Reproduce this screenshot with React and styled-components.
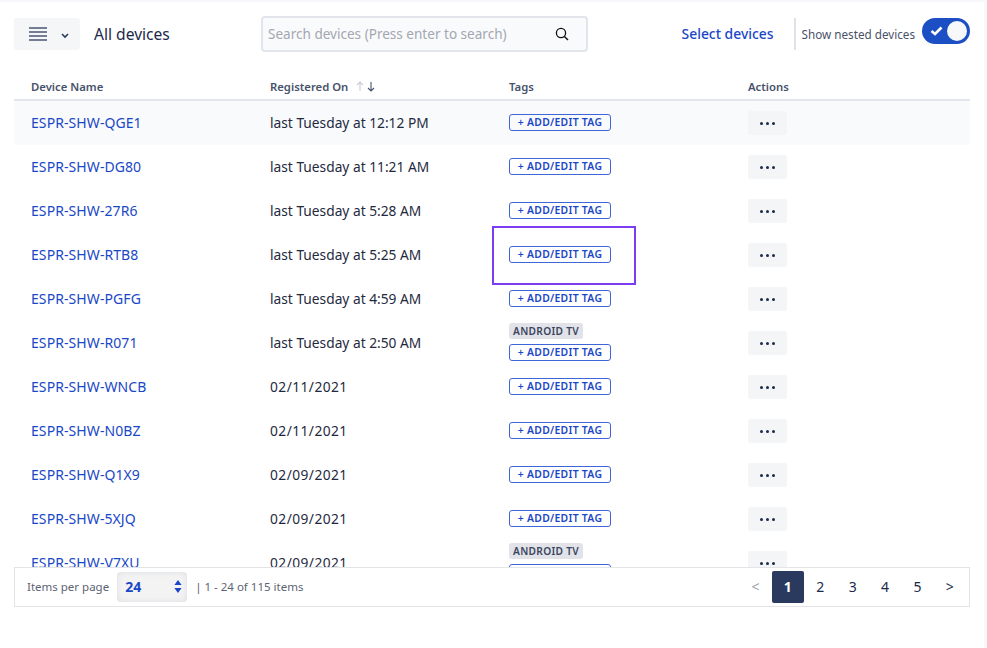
import React from 'react';
import styled, { createGlobalStyle } from 'styled-components';

const GlobalStyle = createGlobalStyle`
    html, body {
        margin: 0;
        padding: 0;
        background: #f7f8fb;
        font-family: "Noto Sans", "Open Sans", Arial, sans-serif;
    }
    * { box-sizing: border-box; }
`

const Page = styled.div`
    width: 987px;
    height: 648px;
    padding-top: 2px;
    overflow: hidden;
`
const Card = styled.div`
    width: 984px;
    height: 646px;
    padding: 14px 14px 0;
    background: #fff;
    display: flex;
    flex-direction: column;
`
const Toolbar = styled.div`
    height: 36px;
    flex: none;
    display: grid;
    grid-template-columns: 247px 327px 1fr;
    align-items: center;
`
const ToolbarLeft = styled.div`
    display: flex;
    align-items: center;
    gap: 14px;
`
const MenuButton = styled.div`
    width: 66px;
    height: 32px;
    background: #f5f6f7;
    border-radius: 3px;
    display: flex;
    align-items: center;
    padding-left: 15px;
    gap: 14px;
`
const Title = styled.div`
    font-size: 15.6px;
    color: #1b2a4a;
    white-space: nowrap;
`
const SearchBox = styled.div`
    height: 36px;
    border: 2px solid #e2e5ec;
    border-radius: 4px;
    background: #f9fafc;
    display: flex;
    align-items: center;
    justify-content: space-between;
    padding: 0 17px 0 5px;
    font-size: 13.55px;
    color: #a3a7b0;
    white-space: nowrap;
`
const ToolbarRight = styled.div`
    display: flex;
    align-items: center;
    justify-content: flex-end;
`
const SelectLink = styled.div`
    font-size: 13.9px;
    font-weight: 500;
    color: #1a47c7;
    white-space: nowrap;
    margin-right: 20px;
    padding-bottom: 2px;
`
const Divider = styled.div`
    width: 2px;
    height: 32px;
    background: #e0e2e8;
    margin-right: 6px;
`
const NestedLabel = styled.div`
    font-size: 11.7px;
    color: #4a5268;
    white-space: nowrap;
    margin-right: 7px;
`
const Toggle = styled.div`
    width: 48px;
    height: 26px;
    margin-bottom: 6px;
    border-radius: 13px;
    background: #1c4fc4;
    display: flex;
    align-items: center;
    justify-content: space-between;
    padding: 0 3px 0 8px;
`
const Knob = styled.div`
    width: 20px;
    height: 20px;
    border-radius: 50%;
    background: #f7f8fa;
`
const TableHead = styled.div`
    flex: none;
    height: 35px;
    margin-top: 14px;
    display: grid;
    grid-template-columns: repeat(4, 239px);
    align-items: center;
    border-bottom: 2px solid #e2e5ec;
    padding-top: 8px;
`
const HeadCell = styled.div`
    font-size: 11.3px;
    font-weight: 600;
    color: #47526b;
    padding-left: 17px;
    display: flex;
    align-items: center;
    gap: 8px;
    white-space: nowrap;
`
const RowList = styled.div`
    height: 466px;
    flex: none;
    overflow: hidden;
`
const Row = styled.div`
    height: 44px;
    display: grid;
    grid-template-columns: repeat(4, 239px);
    align-items: center;
    background: ${props => props.$shaded ? '#f9fafc' : '#fff'};
`
const Cell = styled.div`
    padding: 0 0 2px 17px;
    font-size: 13.75px;
    letter-spacing: ${props => props.$numeric ? '0.45px' : '0'};
    color: #1f2a40;
    white-space: nowrap;
`
const DeviceLink = styled(Cell)`
    font-size: 14px;
    letter-spacing: 0.08px;
    color: #1a47c7;
`
const TagStack = styled.div`
    padding-left: 17px;
    display: flex;
    flex-direction: column;
    align-items: flex-start;
    gap: 5px;
    position: relative;
    top: -1px;
`
const AddTag = styled.div`
    width: 102px;
    height: 17px;
    border: 1px solid #3f66d8;
    border-radius: 3px;
    font-size: 10.4px;
    font-weight: 600;
    letter-spacing: 0.3px;
    line-height: 15px;
    text-align: center;
    color: #1a47c7;
    white-space: nowrap;
`
const TagBadge = styled.div`
    height: 16px;
    padding: 0 4px;
    border-radius: 3px;
    background: #e1e3e8;
    font-size: 10.2px;
    font-weight: 600;
    letter-spacing: 0.3px;
    line-height: 16px;
    color: #3a4560;
    white-space: nowrap;
`
const Highlight = styled.div`
    position: absolute;
    left: 0;
    top: -20px;
    width: 144px;
    height: 59px;
    border: 2px solid #7c3cf0;
`
const ActionButton = styled.div`
    margin-left: 17px;
    width: 39px;
    height: 24px;
    background: #f4f5f6;
    border-radius: 3px;
    display: flex;
    align-items: center;
    justify-content: center;
    gap: 3px;
`
const Dot = styled.span`
    width: 3px;
    height: 3px;
    border-radius: 50%;
    background: #1b2a4a;
`
const Footer = styled.div`
    flex: none;
    height: 40px;
    border: 1px solid #e2e4e8;
    display: flex;
    align-items: center;
    justify-content: space-between;
    padding: 0 3px 0 12px;
`
const FooterLeft = styled.div`
    display: flex;
    align-items: center;
    font-size: 11.5px;
    color: #5c6474;
    white-space: nowrap;
`
const FooterText = styled.span`
    padding-bottom: 2px;
`
const PerPage = styled.div`
    width: 70px;
    height: 30px;
    margin: 0 8px 0 8px;
    padding: 0 5px 2px 8px;
    border-radius: 4px;
    background: #f3f3f4;
    box-shadow: inset 0 0 6px #dcdddf;
    display: flex;
    align-items: center;
    justify-content: space-between;
    font-size: 14px;
    font-weight: 700;
    color: #1a47c7;
`
const Pager = styled.div`
    display: flex;
    align-items: center;
`
const PageItem = styled.div`
    width: 32.4px;
    height: 32px;
    padding-bottom: 2px;
    border-radius: 2px;
    display: flex;
    align-items: center;
    justify-content: center;
    font-size: 14px;
    font-weight: ${props => props.$active ? 700 : 400};
    background: ${props => props.$active ? '#2a3a5e' : 'transparent'};
    color: ${props => props.$active ? '#fff' : props.$muted ? '#9aa1b0' : '#1b2a4a'};
`

const devices = [
    { name: 'ESPR-SHW-QGE1', date: 'last Tuesday at 12:12 PM' },
    { name: 'ESPR-SHW-DG80', date: 'last Tuesday at 11:21 AM' },
    { name: 'ESPR-SHW-27R6', date: 'last Tuesday at 5:28 AM' },
    { name: 'ESPR-SHW-RTB8', date: 'last Tuesday at 5:25 AM', highlight: true },
    { name: 'ESPR-SHW-PGFG', date: 'last Tuesday at 4:59 AM' },
    { name: 'ESPR-SHW-R071', date: 'last Tuesday at 2:50 AM', tag: 'ANDROID TV' },
    { name: 'ESPR-SHW-WNCB', date: '02/11/2021', numeric: true },
    { name: 'ESPR-SHW-N0BZ', date: '02/11/2021', numeric: true },
    { name: 'ESPR-SHW-Q1X9', date: '02/09/2021', numeric: true },
    { name: 'ESPR-SHW-5XJQ', date: '02/09/2021', numeric: true },
    { name: 'ESPR-SHW-V7XU', date: '02/09/2021', numeric: true, tag: 'ANDROID TV' },
]

const MenuIcon = () => (
    <svg width="18" height="14" viewBox="0 0 18 14">
        <path d="M0 1h18M0 5h18M0 9h18M0 13h18" stroke="#4a5674" strokeWidth="1.3" />
    </svg>
)
const ChevronIcon = () => (
    <svg width="8" height="6" viewBox="0 0 8 6" style={{ marginTop: 4 }}>
        <path d="M1 1l3 3 3-3" fill="none" stroke="#2a3a5e" strokeWidth="1.6" />
    </svg>
)
const SearchIcon = () => (
    <svg width="14" height="14" viewBox="0 0 14 14">
        <circle cx="6" cy="6" r="4.6" fill="none" stroke="#111" strokeWidth="1.3" />
        <path d="M9.4 9.4L13 13" stroke="#111" strokeWidth="1.4" />
    </svg>
)
const CheckIcon = () => (
    <svg width="13" height="10" viewBox="0 0 13 10">
        <path d="M1.5 5l3.5 3 6.5-6.5" fill="none" stroke="#fff" strokeWidth="2.6" />
    </svg>
)
const SortIcon = () => (
    <svg width="20" height="11" viewBox="0 0 20 11">
        <path d="M4 10V1M1 4l3-3 3 3" fill="none" stroke="#c9cdd6" strokeWidth="1.1" />
        <path d="M15 1v9M12 7l3 3 3-3" fill="none" stroke="#47526b" strokeWidth="1.1" />
    </svg>
)
const UpDownIcon = () => (
    <svg width="8" height="13" viewBox="0 0 8 13">
        <path d="M4 0l3.6 5H.4zM4 13L.4 8h7.2z" fill="#1a47c7" />
    </svg>
)

const DeviceRow = ({ device, shaded }) => (
    <Row $shaded={shaded}>
        <DeviceLink>{device.name}</DeviceLink>
        <Cell $numeric={device.numeric}>{device.date}</Cell>
        <TagStack>
            {device.tag && <TagBadge>{device.tag}</TagBadge>}
            <AddTag>+ ADD/EDIT TAG</AddTag>
            {device.highlight && <Highlight />}
        </TagStack>
        <div>
            <ActionButton>
                <Dot /><Dot /><Dot />
            </ActionButton>
        </div>
    </Row>
)

const App = () => {
    return (
        <Page>
            <GlobalStyle />
            <Card>
                <Toolbar>
                    <ToolbarLeft>
                        <MenuButton>
                            <MenuIcon />
                            <ChevronIcon />
                        </MenuButton>
                        <Title>All devices</Title>
                    </ToolbarLeft>
                    <SearchBox>
                        Search devices (Press enter to search)
                        <SearchIcon />
                    </SearchBox>
                    <ToolbarRight>
                        <SelectLink>Select devices</SelectLink>
                        <Divider />
                        <NestedLabel>Show nested devices</NestedLabel>
                        <Toggle>
                            <CheckIcon />
                            <Knob />
                        </Toggle>
                    </ToolbarRight>
                </Toolbar>

                <TableHead>
                    <HeadCell>Device Name</HeadCell>
                    <HeadCell>Registered On <SortIcon /></HeadCell>
                    <HeadCell>Tags</HeadCell>
                    <HeadCell>Actions</HeadCell>
                </TableHead>

                <RowList>
                    {devices.map((device, i) => (
                        <DeviceRow key={device.name} device={device} shaded={i === 0} />
                    ))}
                </RowList>

                <Footer>
                    <FooterLeft>
                        <FooterText>Items per page</FooterText>
                        <PerPage>24 <UpDownIcon /></PerPage>
                        <FooterText>| 1 - 24 of 115 items</FooterText>
                    </FooterLeft>
                    <Pager>
                        <PageItem $muted>&lt;</PageItem>
                        <PageItem $active>1</PageItem>
                        <PageItem>2</PageItem>
                        <PageItem>3</PageItem>
                        <PageItem>4</PageItem>
                        <PageItem>5</PageItem>
                        <PageItem>&gt;</PageItem>
                    </Pager>
                </Footer>
            </Card>
        </Page>
    );
}

export default App;
